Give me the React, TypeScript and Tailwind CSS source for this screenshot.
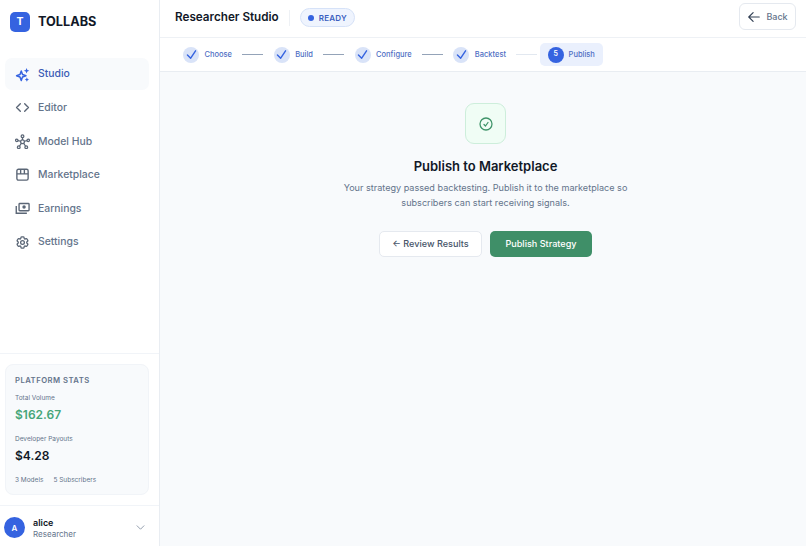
import { HiOutlineCog6Tooth, HiOutlineArrowLeft, HiOutlineCheck, HiOutlineCheckCircle, HiOutlineChevronDown } from "react-icons/hi2";

type IconProps = { className?: string };

function SparkIcon({ className }: IconProps) {
  return (
    <svg viewBox="0 0 24 24" className={className}>
      <path d="M10 6.500 12 12l5.500 2-5.500 2L10 21.500 8 16l-5.500-2L8 12z" fill="none" stroke="currentColor" strokeWidth="2.400" strokeLinejoin="round" />
      <path d="M18.500 1.500 19.800 4.700 23 6l-3.200 1.300L18.500 10.500l-1.300-3.200L14 6l3.200-1.300z" fill="currentColor" />
      <path d="M19 16.500 20.100 19 22.500 20l-2.400 1.100L19 23.500l-1.100-2.400L15.500 20l2.400-1z" fill="currentColor" />
    </svg>
  );
}

function CodeIcon({ className }: IconProps) {
  return (
    <svg viewBox="0 0 24 24" fill="none" stroke="currentColor" strokeWidth="2.200" strokeLinecap="round" strokeLinejoin="round" className={className}>
      <path d="M8.500 6 2.500 12l6 6M15.500 6l6 6-6 6" />
    </svg>
  );
}

function HubIcon({ className }: IconProps) {
  return (
    <svg viewBox="0 0 24 24" fill="none" stroke="currentColor" strokeWidth="2" className={className}>
      <circle cx="12" cy="12.500" r="3" />
      <circle cx="12" cy="3.500" r="2.200" />
      <circle cx="2.800" cy="10" r="2" />
      <circle cx="21.200" cy="10" r="2" />
      <circle cx="6" cy="21" r="2.200" />
      <circle cx="18" cy="21" r="2.200" />
      <path d="M12 5.700V9.500M4.800 10.500 9 11.600M19.200 10.500 15 11.600M7.200 19.200 10.200 15M16.800 19.200 13.800 15" />
    </svg>
  );
}

function StoreIcon({ className }: IconProps) {
  return (
    <svg viewBox="0 0 24 24" fill="none" stroke="currentColor" strokeWidth="2.200" strokeLinejoin="round" className={className}>
      <rect x="3" y="3.500" width="18" height="17.500" rx="2.500" />
      <path d="M3 11h18M9 3.500V11M15 3.500V11" />
    </svg>
  );
}

function MoneyIcon({ className }: IconProps) {
  return (
    <svg viewBox="0 0 24 24" fill="none" stroke="currentColor" strokeWidth="2.200" className={className}>
      <rect x="6.500" y="4" width="16" height="11.500" rx="1.200" />
      <circle cx="14.500" cy="9.700" r="2.800" fill="currentColor" stroke="none" />
      <path d="M2 8v11.500h17" />
    </svg>
  );
}

function GearIcon({ className }: IconProps) {
  return <HiOutlineCog6Tooth className={className} strokeWidth={2.100} />;
}

const nav = [
  { label: "Studio", Icon: SparkIcon, active: true },
  { label: "Editor", Icon: CodeIcon },
  { label: "Model Hub", Icon: HubIcon },
  { label: "Marketplace", Icon: StoreIcon },
  { label: "Earnings", Icon: MoneyIcon },
  { label: "Settings", Icon: GearIcon },
];

const steps = [
  { label: "Choose", line: "bg-[#94a3b8]" },
  { label: "Build", line: "bg-[#94a3b8]" },
  { label: "Configure", line: "bg-[#94a3b8]" },
  { label: "Backtest", line: "bg-[#e2e8f0]" },
];

export default function App() {
  return (
    <div className="flex h-[546px] w-[806px] overflow-hidden bg-white font-['Inter',sans-serif] text-[#0f172a]">
      <aside className="flex w-[160px] shrink-0 flex-col border-r border-[#e9edf2] bg-white">
        <div className="flex h-[44px] items-center gap-[8px] px-[10px]">
          <div className="flex h-[20px] w-[20px] items-center justify-center rounded-[5px] bg-[#3563e0] text-[10.5px] font-bold text-white">T</div>
          <span className="text-[12.700px] font-bold text-[#111827]">TOLLABS</span>
        </div>
        <nav className="mt-[14.400px] flex flex-col gap-[2px] pl-[5px] pr-[10px]">
          {nav.map(({ label, Icon, active }) => (
            <div key={label} className={`flex h-[31.6px] items-center gap-[8px] rounded-[7px] px-[10px] text-[10.4px] font-medium ${active ? "bg-[#f8fafc] text-[#3b5bb5]" : "text-[#64748b]"}`}>
              <Icon className={`h-[15px] w-[15px] shrink-0 ${active ? "text-[#3563e0]" : "text-[#5b6676]"}`} />
              <span>{label}</span>
            </div>
          ))}
        </nav>
        <div className="mt-auto border-t border-[#f1f4f8] pb-[10px] pl-[5px] pr-[10px] pt-[10px]">
          <div className="h-[131px] rounded-[8px] border border-[#f1f4f8] bg-[#f8fafc] px-[9px] pt-[11px]">
            <div className="text-[7.7px] font-semibold leading-[10px] tracking-[0.06em] text-[#64748b]">PLATFORM STATS</div>
            <div className="mt-[8px] text-[6.5px] leading-[9px] text-[#64748b]">Total Volume</div>
            <div className="mt-[4px] text-[12px] font-semibold leading-[16px] text-[#46a578]">$162.67</div>
            <div className="mt-[12px] text-[6.5px] leading-[9px] text-[#64748b]">Developer Payouts</div>
            <div className="mt-[4px] text-[12px] font-semibold leading-[16px] text-[#111827]">$4.28</div>
            <div className="mt-[12px] flex gap-[10px] text-[6.5px] leading-[9px] text-[#64748b]">
              <span>3 Models</span>
              <span>5 Subscribers</span>
            </div>
          </div>
        </div>
        <div className="flex h-[41px] items-center border-t border-[#f1f4f8] pl-[4px] pr-[13px] pt-[3px]">
          <div className="flex h-[21px] w-[21px] items-center justify-center rounded-full bg-[#3563e0] text-[8px] font-semibold text-white">A</div>
          <div className="ml-[8px] flex-1 pt-[2px]">
            <div className="text-[9px] font-semibold leading-[11px] text-[#111827]">alice</div>
            <div className="mt-[1px] text-[8px] leading-[11px] text-[#64748b]">Researcher</div>
          </div>
          <HiOutlineChevronDown className="h-[11px] w-[11px] text-[#64748b]" />
        </div>
      </aside>
      <main className="flex min-w-0 flex-1 flex-col bg-[#f8fafc]">
        <header className="flex h-[38px] items-center border-b border-[#eef1f5] bg-white pb-[2px] pl-[15px] pr-[10px]">
          <h1 className="text-[11.7px] font-semibold text-[#111827]">Researcher Studio</h1>
          <div className="ml-[10px] h-[16px] w-px bg-[#eef1f5]" />
          <div className="ml-[10px] flex h-[19px] items-center gap-[5px] rounded-full border border-[#d6e2f8] bg-[#eff4fe] px-[7px] text-[8px] font-semibold tracking-[0.03em] text-[#3b5fc0]">
            <span className="h-[6px] w-[6px] rounded-full bg-[#3563e0]" />
            READY
          </div>
          <button className="-mt-[2px] ml-auto flex h-[27px] w-[57px] items-center justify-center gap-[5px] rounded-[6px] border border-[#e5e9ef] bg-white text-[9px] font-medium text-[#64748b]">
            <HiOutlineArrowLeft className="h-[14px] w-[14px] text-[#334155]" strokeWidth={2} />
            Back
          </button>
        </header>
        <div className="flex h-[34px] items-center border-b border-[#e9edf2] bg-white pl-[23px]">
          {steps.map((s) => (
            <div key={s.label} className="flex items-center">
              <div className="flex h-[16px] w-[16px] items-center justify-center rounded-full bg-[#d9e3f8]">
                <HiOutlineCheck className="h-[13px] w-[13px] text-[#3563e0]" strokeWidth={2.600} />
              </div>
              <span className="ml-[5.5px] text-[7.5px] font-medium text-[#4f6fc4]">{s.label}</span>
              <div className={`mx-[10.300px] h-px w-[21px] ${s.line}`} />
            </div>
          ))}
          <div className="-ml-[8px] flex h-[23px] items-center gap-[5px] rounded-[5px] bg-[#eaf0fd] px-[8px]">
            <div className="flex h-[16px] w-[16px] items-center justify-center rounded-full bg-[#3563e0] text-[7px] font-semibold text-white">5</div>
            <span className="text-[7.5px] font-medium text-[#4f6fc4]">Publish</span>
          </div>
        </div>
        <section className="flex flex-col items-center pl-[5px] pt-[31px]">
          <div className="flex h-[41px] w-[41px] items-center justify-center rounded-[9px] border border-[#cdeedb] bg-[#f0fdf5]">
            <HiOutlineCheckCircle className="h-[16px] w-[16px] text-[#3f9469]" strokeWidth={1.900} />
          </div>
          <h2 className="mt-[12px] text-[13px] font-semibold leading-[20px] text-[#111827]">Publish to Marketplace</h2>
          <p className="mt-[4px] w-[300px] text-center text-[9.1px] leading-[15px] text-[#64748b]">
            Your strategy passed backtesting. Publish it to the marketplace so subscribers can start receiving signals.
          </p>
          <div className="mt-[21px] flex gap-[8px]">
            <button className="h-[26px] w-[103px] rounded-[5px] border border-[#e5e9ef] bg-white text-[9.1px] font-medium text-[#475569]">← Review Results</button>
            <button className="h-[26px] w-[102px] rounded-[5px] bg-[#3f8f68] text-[9.1px] font-medium text-white">Publish Strategy</button>
          </div>
        </section>
      </main>
    </div>
  );
}
